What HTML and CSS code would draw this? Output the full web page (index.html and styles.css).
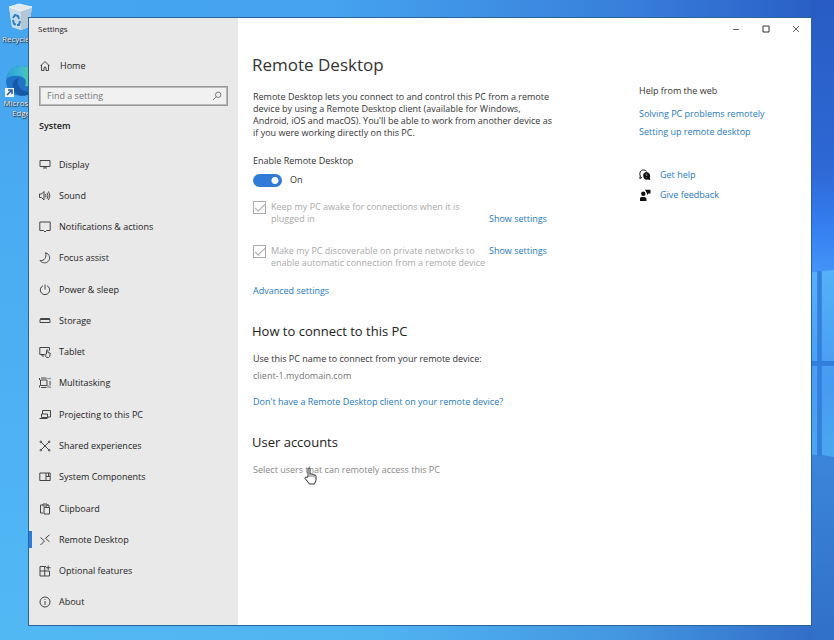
FILE: index.html
```html
<!DOCTYPE html>
<html lang="en">
<head>
<meta charset="utf-8">
<title>Settings</title>
<link rel="stylesheet" href="styles.css">
</head>
<body>
<svg class="wallpaper" viewBox="0 0 834 640" preserveAspectRatio="none" aria-hidden="true">
  <defs>
    <linearGradient id="top" x1="0" x2="1" y1="0" y2="0"><stop offset="0" stop-color="#45a5f0"/><stop offset=".4" stop-color="#45a3f0"/><stop offset=".75" stop-color="#387fda"/><stop offset="1" stop-color="#285cc4"/></linearGradient>
    <linearGradient id="bottom" x1="0" x2="1" y1="0" y2="0"><stop offset="0" stop-color="#52b8f4"/><stop offset=".45" stop-color="#50b4f1"/><stop offset=".75" stop-color="#4396e0"/><stop offset="1" stop-color="#3069c6"/></linearGradient>
    <linearGradient id="right" x1="0" x2="0" y1="0" y2="1"><stop offset="0" stop-color="#285cc4"/><stop offset=".26" stop-color="#2e68d4"/><stop offset=".35" stop-color="#347df0"/><stop offset=".42" stop-color="#4293f6"/><stop offset=".7" stop-color="#3c86dc"/><stop offset="1" stop-color="#3170c9"/></linearGradient>
    <linearGradient id="left" x1="0" x2="0" y1="0" y2="1"><stop offset="0" stop-color="#45a5f0"/><stop offset="1" stop-color="#52b8f4"/></linearGradient>
    <linearGradient id="pane" x1="0" x2="0" y1="0" y2="1"><stop offset="0" stop-color="#55b1f8"/><stop offset=".6" stop-color="#479bf2"/><stop offset="1" stop-color="#4ba7ef"/></linearGradient>
  </defs>
  <rect width="834" height="320" fill="url(#top)"/>
  <rect y="320" width="834" height="320" fill="url(#bottom)"/>
  <rect width="29" height="640" fill="url(#left)"/>
  <rect x="811" width="23" height="640" fill="url(#right)"/>
  <path d="M800 273l17-1v183l-17-1zM822 271l12-1v187l-12-2z" fill="url(#pane)"/>
  <path d="M800 361h34v5h-34zM817.500 271h4v185h-4z" fill="#357fdc"/>
</svg>

<ul class="shortcuts">
  <li><a href="#">
    <svg class="bin" viewBox="0 0 26 28" aria-hidden="true"><path d="M1 4l10-3 13 3-3 20-8 3-9-3z" fill="#d8e6ef"/><path d="M1 4l12 4v19l-9-3z" fill="#c7dbe9"/><path d="M13 8l11-4-3 20-8 3z" fill="#b2c7d7"/><path d="M1 4l10-3 13 3-11 4z" fill="#dfe8ed" stroke="#f2f6f8" stroke-width=".8"/><path d="M5 15l2-3 3 1 1 3M5 17l1 4 2 .5M12 18l-1 4h-2" fill="none" stroke="#2c7fc4" stroke-width="2"/></svg>
    <span>Recycle Bin</span></a></li>
  <li><a href="#">
    <svg class="edge" viewBox="0 0 32 32" aria-hidden="true"><defs><linearGradient id="eg" x1="0" x2="1"><stop offset="0" stop-color="#2f9fd6"/><stop offset=".5" stop-color="#3bb9d3"/><stop offset="1" stop-color="#62d67b"/></linearGradient></defs><circle cx="16" cy="16" r="15" fill="#2074c8"/><path d="M1 14C3 4 10 1 16 1c9 0 15 6 15 13 0 6-5 8-11 7 2-6 0-9-6-10C8 10 4 11 1 14z" fill="url(#eg)"/><path d="M14 13c-4 7 2 15 13 14-4 5-13 5-17 0-4-6-3-12 4-14z" fill="#1859a5"/><path d="M0 23h9v9H0z" fill="#f0f4f8"/><path d="M2 30l4-4M3 25h4v4" fill="none" stroke="#2458a4" stroke-width="1.500"/></svg>
    <span>Microsoft Edge</span></a></li>
</ul>

<div class="window">
  <aside class="sidebar">
    <div class="app-title">Settings</div>
    <a class="nav-link home" href="#"><svg viewBox="0 0 12 12"><path d="M1.500 6L6 1.500 10.500 6M2.500 5v5.500H5V7.500q1-1 2 0v3h2.500V5"/></svg><span>Home</span></a>
    <form class="search">
      <input type="text" placeholder="Find a setting" aria-label="Find a setting">
      <button type="button" aria-label="Search"><svg viewBox="0 0 12 12"><circle cx="7.200" cy="4.800" r="2.700"/><path d="M5.300 6.700L2 10"/></svg></button>
    </form>
    <h2>System</h2>
    <nav>
      <a class="nav-link" href="#"><svg viewBox="0 0 12 12"><path d="M1 1.500h10v6H1zM4 9h4M6 7.500V9"/></svg><span>Display</span></a>
      <a class="nav-link" href="#"><svg viewBox="0 0 12 12"><path d="M.5 4v3.500h2L5 10V1.500L2.500 4zM6.500 4.200q1 1.500 0 3.100M8 2.800q2 3 0 6M9.500 1.500q2.800 4.200 0 8.500"/></svg><span>Sound</span></a>
      <a class="nav-link" href="#"><svg viewBox="0 0 12 12"><path d="M.8 1h10.400v8.500H7.500L6 11 4.500 9.500H.8z"/></svg><span>Notifications &amp; actions</span></a>
      <a class="nav-link" href="#"><svg viewBox="0 0 12 12"><path d="M6.500.8c4.500 1 5.500 6.500 2.200 9-2.500 1.800-6 1.200-7.700-1.300 4.500.8 7-3.500 5.500-7.700z"/></svg><span>Focus assist</span></a>
      <a class="nav-link" href="#"><svg viewBox="0 0 12 12"><path d="M4 1.700a4.700 4.700 0 1 0 4 0M6 .5v5"/></svg><span>Power &amp; sleep</span></a>
      <a class="nav-link" href="#"><svg viewBox="0 0 12 12"><path d="M1 4.500h10v3H1zM1 4l.5-.5h9l.5.500"/></svg><span>Storage</span></a>
      <a class="nav-link" href="#"><svg viewBox="0 0 12 12"><path d="M5 8.500H.8v-7h9.700v3M3 8.500V10h2M7.500 8V4.500q0-.8.700-.8t.7.800v2l2.300.7-.3 3-1.200 1.300H7.500L5.500 8.500q.7-1 2 .5"/></svg><span>Tablet</span></a>
      <a class="nav-link" href="#"><svg viewBox="0 0 12 12"><path d="M1.500 3h6.500v5.500H1.500zM.5 1v2M9 1v1M.5 10.500v-2M9 10.500v-2M2 1h5.500M2 10.500h5.500M11 .8v1.500M11 4v4.500M11 9.500V11"/></svg><span>Multitasking</span></a>
      <a class="nav-link" href="#"><svg viewBox="0 0 12 12"><path d="M3.500 5V1.500h8V8H8.500M2.500 5h6v3.500h-6zM.5 9.500h8"/></svg><span>Projecting to this PC</span></a>
      <a class="nav-link" href="#"><svg viewBox="0 0 12 12"><path d="M2 2l8 8M10 2L2 10"/><circle cx="1.800" cy="1.800" r=".8"/><circle cx="10.200" cy="1.800" r=".8"/><circle cx="1.800" cy="10.200" r=".8"/><circle cx="10.200" cy="10.200" r=".8"/></svg><span>Shared experiences</span></a>
      <a class="nav-link" href="#"><svg viewBox="0 0 12 12"><path d="M.8 2h10.400v7.500H.8zM7 2v7.500M7 5.500h4M9.500 2v3.500"/></svg><span>System Components</span></a>
      <a class="nav-link" href="#"><svg viewBox="0 0 12 12"><path d="M4 10H1.500V2H4M8 2h2v2M4 1h4v2H4zM5 4.500h5.500V11H5z"/></svg><span>Clipboard</span></a>
      <a class="nav-link current" aria-current="page" href="#"><svg viewBox="0 0 12 12"><path d="M1.500 3.500L5.500 7l-4 4M10.500.8L6.500 4.300l4 3.500"/></svg><span>Remote Desktop</span></a>
      <a class="nav-link" href="#"><svg viewBox="0 0 12 12"><path d="M7 1.500H1V11h9.500V6H1M5.700 1.500V11M9.200.5v4.500M7 2.700h4.500"/></svg><span>Optional features</span></a>
      <a class="nav-link" href="#"><svg viewBox="0 0 12 12"><circle cx="6" cy="6" r="5"/><path d="M6 5v4M6 3v1"/></svg><span>About</span></a>
    </nav>
  </aside>

  <div class="page">
    <div class="controls">
      <button type="button" aria-label="Minimize"><svg viewBox="0 0 10 10"><path d="M2 5.500h6"/></svg></button>
      <button type="button" aria-label="Maximize"><svg class="dark" viewBox="0 0 10 10"><path d="M2 2h6v6H2z"/></svg></button>
      <button type="button" aria-label="Close"><svg viewBox="0 0 10 10"><path d="M2 2l6 6M8 2L2 8"/></svg></button>
    </div>
    <div class="columns">
      <main>
        <h1>Remote Desktop</h1>
        <p class="intro">Remote Desktop lets you connect to and control this PC from a remote<br>device by using a Remote Desktop client (available for Windows,<br>Android, iOS and macOS). You'll be able to work from another device as<br>if you were working directly on this PC.</p>
        <label class="switch-title" for="enable">Enable Remote Desktop</label>
        <div class="switch"><input id="enable" type="checkbox" role="switch" checked><span>On</span></div>
        <div class="option">
          <input id="awake" type="checkbox" checked disabled>
          <label for="awake">Keep my PC awake for connections when it is<br>plugged in</label>
          <a class="low" href="#">Show settings</a>
        </div>
        <div class="option">
          <input id="discover" type="checkbox" checked disabled>
          <label for="discover">Make my PC discoverable on private networks to<br>enable automatic connection from a remote device</label>
          <a href="#">Show settings</a>
        </div>
        <a class="advanced" href="#">Advanced settings</a>
        <h2>How to connect to this PC</h2>
        <p>Use this PC name to connect from your remote device:</p>
        <p class="pc-name">client-1.mydomain.com</p>
        <a class="client" href="#">Don't have a Remote Desktop client on your remote device?</a>
        <h2>User accounts</h2>
        <a class="users" href="#">Select users that can remotely access this PC</a>
      </main>
      <aside class="help">
        <h3>Help from the web</h3>
        <a href="#">Solving PC problems remotely</a>
        <a href="#">Setting up remote desktop</a>
        <div class="support">
          <a href="#"><svg viewBox="0 0 12 12"><path d="M3 8.500L.8 9.500l.5-2.500C0 4 1.500 1 4.500 1 6 1 7 1.500 7.700 2.500" fill="none" stroke="#111"/><path d="M7.300 3a3.800 3.800 0 0 1 3.500 5.300l.5 2.700-2.500-.5A3.800 3.800 0 1 1 7.300 3z"/><path d="M6.500 5.500q1-.8 1.500 0 .2.500-.7 1.500M7.300 8v.8" stroke="#fff" stroke-width=".5" fill="none"/></svg><span>Get help</span></a>
          <a href="#"><svg viewBox="0 0 12 12"><circle cx="4.300" cy="4.700" r="2.200"/><path d="M1 12V9.500Q1 8 2.500 8H6l1.500 1.500V12zM6 .8h5.500v3.700H9.500L8 6V4.500z"/></svg><span>Give feedback</span></a>
        </div>
      </aside>
    </div>
  </div>
</div>
<svg class="cursor" viewBox="0 0 14 18" aria-hidden="true"><path d="M4 10V2q0-1 1-1t1 1v5l1-.5 1 .8 1.200-.3.800.9 1.500.2.5 1v4L10.500 17H5.500L1 11.500q-.3-1.200 1-1.300z" fill="#fff" stroke="#333"/><path d="M6 7v3M8 7.500V10M10 8v2.500" stroke="#333" stroke-width=".7"/></svg>
</body>
</html>
```

FILE: styles.css
```css
* { box-sizing: border-box; }
body {
  margin: 0;
  height: 100vh;
  padding: 17px 22px 14px 28px;
  overflow: hidden;
  font: 9px/12px "Open Sans", "Noto Sans", sans-serif;
  color: #333;
}
h1, h2, h3, p, ul { margin: 0; padding: 0; font-weight: 400; }
a { color: #2879c4; text-decoration: none; }
input, button { margin: 0; font: inherit; }
button { padding: 0; border: 0; background: none; }
svg { display: block; flex: none; }

.wallpaper { position: absolute; inset: 0; width: 100%; height: 100%; z-index: -2; }
.shortcuts { position: absolute; left: 0; top: 3px; z-index: -1; list-style: none; }
.shortcuts a { display: flex; flex-direction: column; align-items: center; width: 42px; height: 62px; font-size: 8px; line-height: 10px; text-align: center; color: #fff; text-shadow: 1px 1px 1px #123, 0 0 1px #123; gap: 3px; }
.shortcuts span { width: 42px; }
.shortcuts li:first-child span { white-space: nowrap; text-align: left; padding-left: 2px; }
.shortcuts li + li a { gap: 1px; }
.bin { width: 26px; height: 28px; }
.edge { width: 32px; height: 32px; }

.window { display: flex; height: 100%; border: 1px solid #27649e; background: #fff; }
.sidebar { flex: 0 0 209px; background: #e9e9e9; }
.app-title { padding: 5px 9px; font-size: 8px; color: #222; }
.nav-link { display: flex; align-items: center; height: 31px; padding-left: 10px; gap: 8px; color: #222; }
.nav-link svg { width: 12px; height: 12px; fill: none; stroke: #444; stroke-width: 1; }
.home { margin-top: 10px; gap: 9px; }
.search { display: flex; margin: 5px 10px 0; height: 20px; border: 1px solid #999; outline: 1px solid #bbb; outline-offset: -2px; background: #f1f1f1; }
.search input { flex: 1; min-width: 0; padding: 0 7px; border: 0; background: none; outline: none; }
.search input::placeholder { color: #777; opacity: 1; }
.search button { width: 16px; }
.search svg { width: 12px; height: 12px; fill: none; stroke: #777; }
.sidebar h2 { margin: 14px 10px 17px; font-weight: 600; font-size: 9px; line-height: 12px; color: #222; }
nav { display: grid; grid-auto-rows: 1fr; height: 469px; }
nav .nav-link { height: auto; }
.current { border: solid; border-width: 0 0 0 3px; padding-left: 7px; border-image: linear-gradient(transparent 25%, #2f7bd6 25% 75%, transparent 75%) 1; }

.page { flex: 1; min-width: 0; }
.controls { display: flex; justify-content: flex-end; height: 21px; }
.controls button { display: grid; place-items: center; width: 30px; }
.controls svg { width: 10px; height: 10px; fill: none; stroke: #666; }
.controls .dark { stroke: #333; }
.columns { display: flex; justify-content: space-between; }
main { flex: 0 0 310px; padding: 13px 0 0 15px; }
h1 { font-size: 17px; line-height: 26px; margin-left: -1px; color: #333; }
.intro { margin-top: 13px; white-space: nowrap; }
.switch-title { display: block; margin-top: 16px; }
.switch { display: flex; align-items: center; gap: 8px; margin-top: 6px; height: 14px; }
.switch input { appearance: none; width: 29px; height: 13px; border-radius: 7px; background: radial-gradient(circle at 22px 50%, #fff 3px, #2f7bd6 4px); }
.option { display: grid; grid-template-columns: 13px 213px 60px; column-gap: 5px; margin-top: 14px; color: #aaa; }
.option + .option { margin-top: 20px; }
.option label { white-space: nowrap; }
.option input { appearance: none; width: 13px; height: 13px; border: 1px solid #aaa; display: grid; place-items: center; }
.option input::before { content: ""; width: 9px; height: 4px; border: solid #aaa; border-width: 0 0 1px 1px; transform: translateY(-1px) rotate(-45deg); }
.low { align-self: end; }
.advanced, .client, .users { display: block; }
.advanced { margin-top: 16px; }
main h2 { margin: 25px 0 13px -1px; font-size: 13px; line-height: 18px; color: #222; }
.pc-name { margin-top: 5px; color: #777; }
.client { margin-top: 14px; }
.client + h2 { margin-top: 25px; }
.users { color: #888; }
.help { flex: 0 0 172px; padding-top: 46px; }
.help h3 { font-size: 9px; margin-bottom: 11px; }
.help > a { display: block; margin-bottom: 6px; }
.support { display: grid; gap: 8px; margin-top: 31px; }
.support a { display: flex; align-items: center; gap: 9px; }
.support svg { width: 12px; height: 12px; fill: #111; }
.cursor { position: absolute; left: 304px; top: 467px; width: 14px; height: 18px; }
```
